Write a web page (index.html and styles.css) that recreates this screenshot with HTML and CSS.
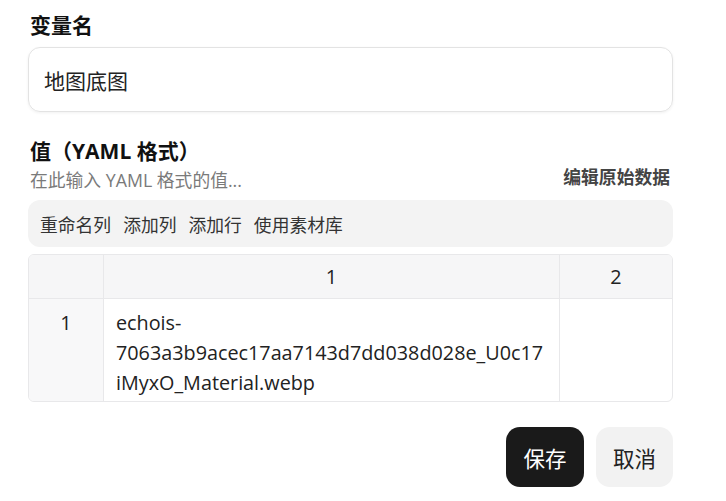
FILE: index.html
```html
<!DOCTYPE html>
<html lang="zh-CN">
<head>
<meta charset="utf-8">
<link rel="stylesheet" href="styles.css">
</head>
<body>
<div class="form">
  <div class="label">变量名</div>
  <div class="input">地图底图</div>
  <div class="label label-value">值（YAML 格式）</div>
  <div class="hint-row">
    <span class="hint">在此输入 YAML 格式的值...</span>
    <span class="raw">编辑原始数据</span>
  </div>
  <div class="toolbar">
    <span>重命名列</span><span>添加列</span><span>添加行</span><span>使用素材库</span>
  </div>
  <table class="grid">
    <thead>
      <tr><th class="corner"></th><th class="c1">1</th><th class="c2">2</th></tr>
    </thead>
    <tbody>
      <tr><td class="rowhead">1</td><td class="cell">echois-<br>7063a3b9acec17aa7143d7dd038d028e_U0c17<br>iMyxO_Material.webp</td><td class="cell"></td></tr>
    </tbody>
  </table>
  <div class="actions">
    <button class="btn save">保存</button>
    <button class="btn cancel">取消</button>
  </div>
</div>
</body>
</html>
```
FILE: styles.css
```css
* { box-sizing: border-box; }
body {
  margin: 0;
  background: #fff;
  color: #1f1f1f;
  font-family: "Open Sans", "Noto Sans CJK SC", sans-serif;
}
.form {
  padding: 11px 53px 0 28px;
  display: flex;
  flex-direction: column;
}
.label {
  font-size: 21px;
  font-weight: 700;
  line-height: 28px;
  padding-left: 2px;
  color: #111;
}
.input {
  margin-top: 8px;
  height: 65px;
  border: 1px solid #e3e3e3;
  border-radius: 12px;
  box-shadow: 0 1px 3px rgba(0,0,0,0.06);
  font-size: 21px;
  display: flex;
  align-items: center;
  padding-left: 15px;
  color: #222;
}
.label-value { margin-top: 25px; }
.hint-row {
  display: flex;
  justify-content: space-between;
  align-items: center;
  margin-top: 1px;
  padding-left: 2px;
  padding-right: 3px;
  height: 26px;
}
.hint { font-size: 17.8px; color: #7a7a7a; }
.raw { font-size: 17.8px; font-weight: 700; color: #444; position: relative; top: -3px; }
.toolbar {
  margin-top: 8px;
  height: 47px;
  background: #f3f3f3;
  border-radius: 12px;
  display: flex;
  align-items: center;
  gap: 12px;
  padding-left: 12px;
  font-size: 17.8px;
  color: #333;
}
.grid {
  margin-top: 7px;
  border-collapse: separate;
  border-spacing: 0;
  border: 1px solid #e8e8ea;
  border-radius: 6px;
  width: 645px;
  font-size: 19.8px;
  color: #222;
  overflow: hidden;
}
.grid th {
  height: 44px;
  background: #f6f6f7;
  font-weight: 400;
  text-align: center;
  border-bottom: 1px solid #e8e8ea;
  padding: 0;
}
.grid th + th, .grid td + td { border-left: 1px solid #e8e8ea; }
.corner { width: 74px; }
.c2 { width: 113px; }
.rowhead {
  background: #f8f8f9;
  text-align: center;
  vertical-align: top;
  padding-top: 9px;
  line-height: 30px;
}
.cell {
  vertical-align: top;
  padding: 9px 12px 3px 12px;
  line-height: 30px;
}
.actions {
  margin-top: 25px;
  display: flex;
  justify-content: flex-end;
  gap: 12px;
}
.btn {
  height: 60px;
  width: 78px;
  border: none;
  border-radius: 14px;
  font-size: 21.5px;
  font-family: "Noto Sans CJK SC", sans-serif;
}
.save { background: #1a1a1a; color: #fff; }
.cancel { background: #f2f2f2; color: #222; width: 77px; }
```
